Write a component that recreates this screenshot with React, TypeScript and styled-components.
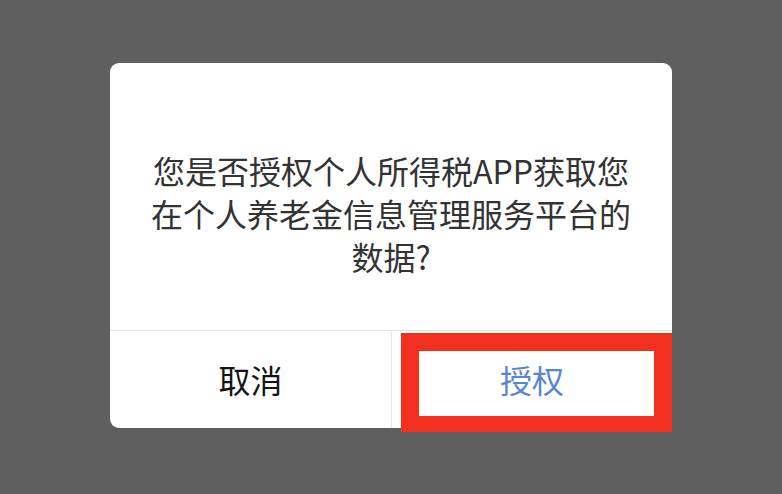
import React from "react";
import styled, { createGlobalStyle } from "styled-components";

const Global = createGlobalStyle`
  html, body { margin: 0; padding: 0; background: #5f5f5f; }
  body { font-family: "Noto Sans CJK SC", "Noto Sans", sans-serif; }
`;

const Screen = styled.div`
  width: 782px;
  height: 494px;
  background: #5f5f5f;
  box-sizing: border-box;
  padding-top: 63px;
  padding-left: 110px;
`;

const Dialog = styled.div`
  width: 562px;
  background: #ffffff;
  border-radius: 9px;
  display: flex;
  flex-direction: column;
`;

const Message = styled.div`
  padding: 86px 30px 52px;
  font-size: 32px;
  line-height: 43px;
  color: #333333;
  text-align: center;
`;

const Actions = styled.div`
  display: grid;
  grid-template-columns: 281px 1px 1fr;
  height: 97px;
  border-top: 1.5px solid #e6e6e6;
`;

const Divider = styled.div`
  background: #e6e6e6;
`;

const ActionButton = styled.div<{ $primary?: boolean }>`
  position: relative;
  display: flex;
  align-items: center;
  justify-content: center;
  font-size: 32px;
  color: ${(p) => (p.$primary ? "#5b86d4" : "#141414")};
  padding-bottom: 2px;
`;

const Highlight = styled.div`
  position: absolute;
  left: 9px;
  top: 2px;
  right: 0;
  bottom: -4px;
  border: 18px solid #f3301f;
  border-bottom-width: 16px;
  pointer-events: none;
`;

export default function App() {
  return (
    <>
      <Global />
      <Screen>
        <Dialog>
          <Message>
            您是否授权个人所得税APP获取您
            <br />
            在个人养老金信息管理服务平台的
            <br />
            数据?
          </Message>
          <Actions>
            <ActionButton>取消</ActionButton>
            <Divider />
            <ActionButton $primary>
              授权
              <Highlight />
            </ActionButton>
          </Actions>
        </Dialog>
      </Screen>
    </>
  );
}
